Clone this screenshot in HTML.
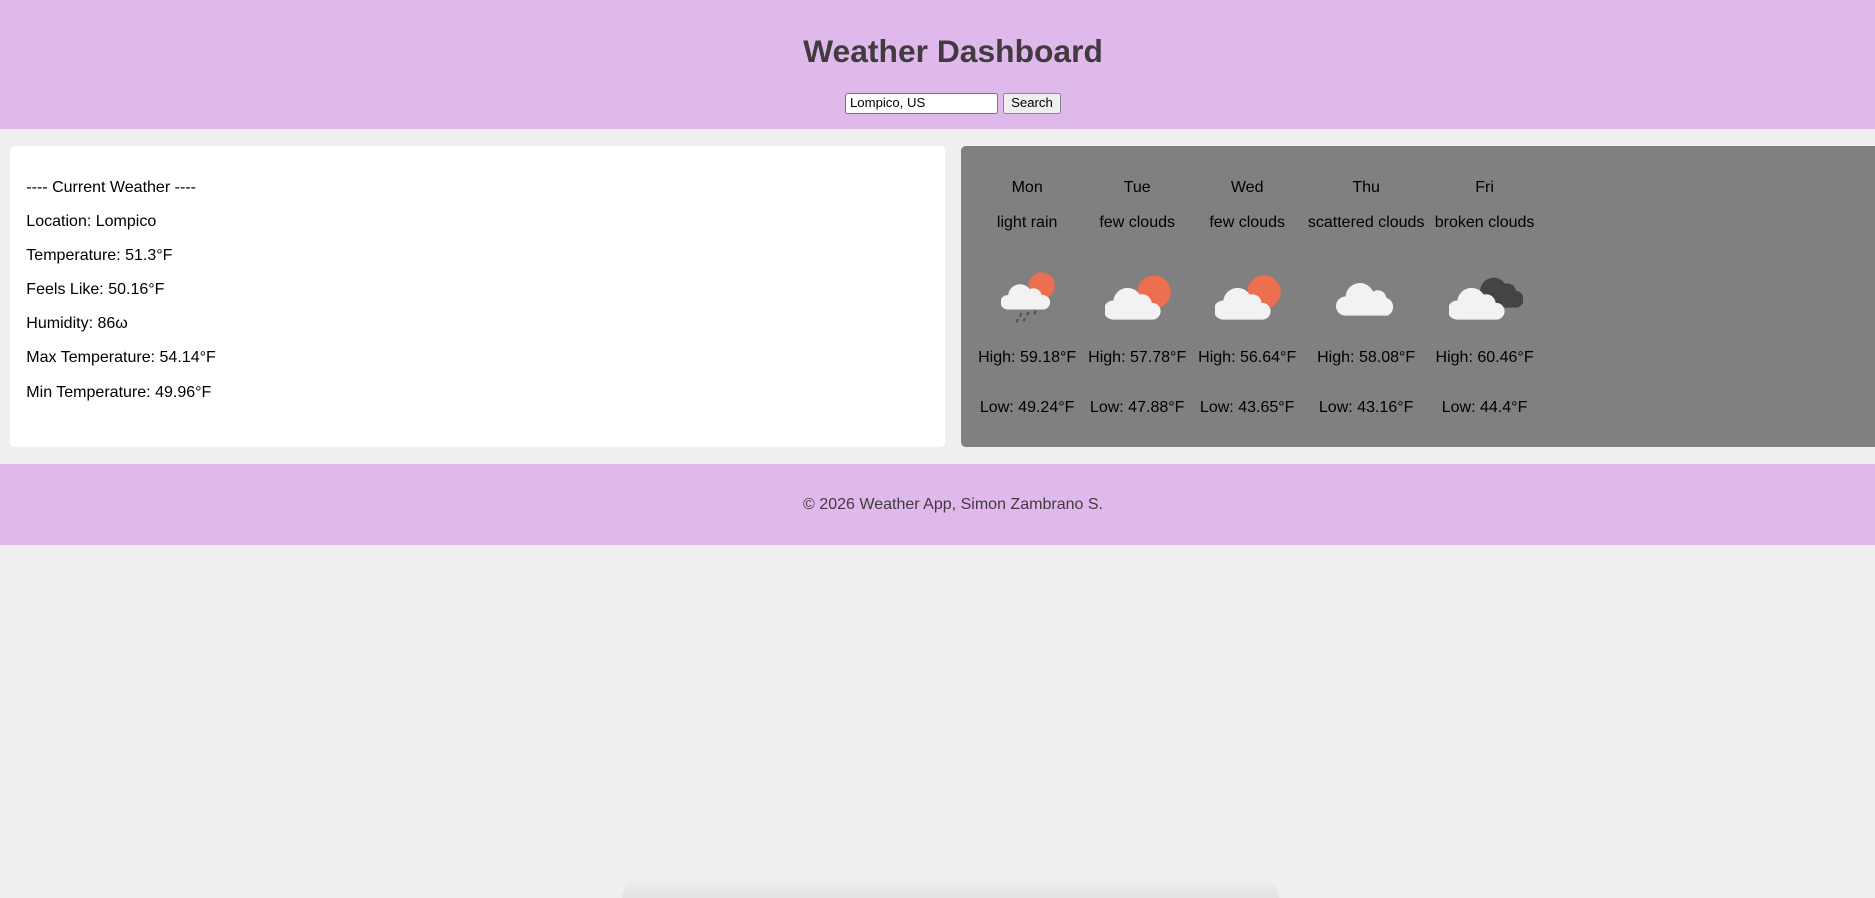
<!DOCTYPE html>
<html><head><meta charset="utf-8"><style>
html,body{margin:0;padding:0;overflow:hidden}
body{zoom:1.19579;width:1568px;height:751px;overflow:hidden;background:#efefef;font-family:"Liberation Sans",Arial,sans-serif;position:relative}
header{background:#e0b9ec;height:108px;text-align:center;position:relative}
h1{margin:0;position:absolute;top:27px;left:26px;right:0;font-size:26.6px;color:#413a3f;font-weight:bold;line-height:32px}
.search{position:absolute;top:78px;left:707px;height:17px}
.inp{position:absolute;left:0;top:0;border:1px solid #777;border-radius:2px;background:#fff;font-size:11px;line-height:15px;padding-left:3px;box-sizing:border-box;width:128px;height:17px;text-align:left}
.btn{position:absolute;left:132px;top:0;width:48px;height:17px;box-sizing:border-box;border:1px solid #888;border-radius:2px;background:#efefef;font-size:11px;line-height:15px;text-align:center}
.left{position:absolute;left:8px;top:122px;width:782px;height:252px;background:#fff;border-radius:4px}
.left p{margin:0;position:absolute;left:14px;font-size:13.4px;color:#000}
.right{position:absolute;left:804px;top:122px;width:764px;height:252px;background:#808080;border-radius:4px 0 0 4px}
.col{position:absolute;top:0;text-align:center;font-size:13.4px;color:#000}
.col div{position:absolute;left:-10px;right:-10px;white-space:nowrap}
.col svg{position:absolute}
footer{position:absolute;top:388px;left:0;width:1568px;height:68px;background:#e0b9ec;font-size:13.4px;color:#413a3f;line-height:68px}
footer span{position:absolute;left:26px;right:0;text-align:center}
.sh{position:absolute;left:520px;top:735px;width:550px;height:16px;background:linear-gradient(to bottom,rgba(0,0,0,0),rgba(0,0,0,0.05));border-radius:20px 20px 0 0}
</style></head><body>
<header><h1>Weather Dashboard</h1>
<div class="search"><div class="inp">Lompico, US</div><div class="btn">Search</div></div></header>
<div class="left">
<p style="top:27px">---- Current Weather ----</p>
<p style="top:55px">Location: Lompico</p>
<p style="top:84px">Temperature: 51.3°F</p>
<p style="top:112px">Feels Like: 50.16°F</p>
<p style="top:141px">Humidity: 86ω</p>
<p style="top:169px">Max Temperature: 54.14°F</p>
<p style="top:198px">Min Temperature: 49.96°F</p>
</div>
<div class="right">
<div class="col" style="left:14px;width:82px">
<div style="top:27px">Mon</div><div style="top:56px">light rain</div>
<svg style="left:19px;top:104px" width="46" height="44" viewBox="0 0 46 44"><circle cx="34" cy="13" r="11" fill="#ec6f4f"/><path d="M5 33a6 6 0 0 1 1-12 10 10 0 0 1 18-5 7 7 0 0 1 10 5 6 6 0 0 1 2 12z" fill="#f2f2f2"/><g stroke="#555" stroke-width="2"><path d="M17 36l-1 3M23 35l-1 3M29 34l-1 3M14 41l-1 3M20 40l-1 3"/></g></svg>
<div style="top:169px">High: 59.18°F</div><div style="top:211px">Low: 49.24°F</div></div>
<div class="col" style="left:106px;width:82px">
<div style="top:27px">Tue</div><div style="top:56px">few clouds</div>
<svg style="left:14px;top:106px" width="56" height="42" viewBox="0 0 56 42"><circle cx="41" cy="16" r="14" fill="#ec6f4f"/><path d="M7 39a8 8 0 0 1 0-16 12 12 0 0 1 22-5 8 8 0 0 1 10 7 7 7 0 0 1 1 14z" fill="#f2f2f2"/></svg>
<div style="top:169px">High: 57.78°F</div><div style="top:211px">Low: 47.88°F</div></div>
<div class="col" style="left:198px;width:82px">
<div style="top:27px">Wed</div><div style="top:56px">few clouds</div>
<svg style="left:14px;top:106px" width="56" height="42" viewBox="0 0 56 42"><circle cx="41" cy="16" r="14" fill="#ec6f4f"/><path d="M7 39a8 8 0 0 1 0-16 12 12 0 0 1 22-5 8 8 0 0 1 10 7 7 7 0 0 1 1 14z" fill="#f2f2f2"/></svg>
<div style="top:169px">High: 56.64°F</div><div style="top:211px">Low: 43.65°F</div></div>
<div class="col" style="left:290px;width:97px">
<div style="top:27px">Thu</div><div style="top:56px">scattered clouds</div>
<svg style="left:23px;top:108px" width="52" height="36" viewBox="0 0 52 36"><path d="M8 34a8 8 0 0 1 0-16 12 12 0 0 1 23-4 7 7 0 0 1 11 5 8 8 0 0 1 1 15z" fill="#f2f2f2"/></svg>
<div style="top:169px">High: 58.08°F</div><div style="top:211px">Low: 43.16°F</div></div>
<div class="col" style="left:396px;width:83px">
<div style="top:27px">Fri</div><div style="top:56px">broken clouds</div>
<svg style="left:12px;top:106px" width="62" height="42" viewBox="0 0 62 42"><path d="M28 22a11 11 0 0 1 19-13 7 7 0 0 1 9 6 7 7 0 0 1-1 14h-25z" fill="#444"/><path d="M7 39a8 8 0 0 1 0-16 12 12 0 0 1 22-5 8 8 0 0 1 10 7 7 7 0 0 1 1 14z" fill="#f2f2f2"/></svg>
<div style="top:169px">High: 60.46°F</div><div style="top:211px">Low: 44.4°F</div></div>
</div>
<footer><span>© 2026 Weather App, Simon Zambrano S.</span></footer>
<div class="sh"></div>
</body></html>
